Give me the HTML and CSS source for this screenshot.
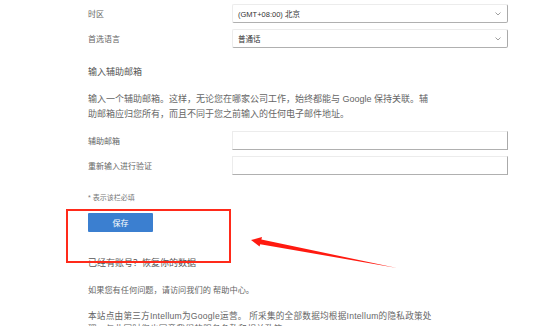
FILE: index.html
```html
<!DOCTYPE html>
<html lang="zh-CN">
<head>
<meta charset="utf-8">
<title>设置</title>
<link rel="stylesheet" href="styles.css">
</head>
<body>
<div class="page">
  <div class="row">
    <span class="label">时区</span>
    <div class="field select"><span>(GMT+08:00) 北京</span>
      <svg class="chev" width="6" height="4" viewBox="0 0 6 4"><path d="M0.5 0.5 L3 3 L5.5 0.5" fill="none" stroke="#888" stroke-width="0.8"/></svg>
    </div>
  </div>
  <div class="row">
    <span class="label">首选语言</span>
    <div class="field select"><span>普通话</span>
      <svg class="chev" width="6" height="4" viewBox="0 0 6 4"><path d="M0.5 0.5 L3 3 L5.5 0.5" fill="none" stroke="#888" stroke-width="0.8"/></svg>
    </div>
  </div>

  <h3 class="heading">输入辅助邮箱</h3>
  <p class="desc">输入一个辅助邮箱。这样，无论您在哪家公司工作，始终都能与 Google 保持关联。辅助邮箱应归您所有，而且不同于您之前输入的任何电子邮件地址。</p>

  <div class="row row-input">
    <span class="label">辅助邮箱</span>
    <div class="field input"></div>
  </div>
  <div class="row row-input">
    <span class="label">重新输入进行验证</span>
    <div class="field input"></div>
  </div>

  <p class="note">* 表示该栏必填</p>
  <button class="save">保存</button>

  <h3 class="sub">已经有账号？恢复你的数据</h3>
  <p class="text">如果您有任何问题，请访问我们的 帮助中心。</p>
  <p class="text last">本站点由第三方Intellum为Google运营。 所采集的全部数据均根据Intellum的隐私政策处理，与此同时您也同意我们的服务条款和相关政策。</p>

  <div class="annot-box"></div>
  <svg class="annot-arrow" width="554" height="326" viewBox="0 0 554 326">
    <polygon points="251,240 262,237 261.4,239.6 397,268 260.2,244.2 259.6,246.6" fill="#ff1a10"/>
  </svg>
</div>
</body>
</html>
```
FILE: styles.css
```css
html, body {
  margin: 0;
  padding: 0;
  background: #fff;
}
body {
  font-family: "Liberation Sans", "Noto Sans CJK SC", sans-serif;
  color: #555;
  overflow: hidden;
}
.page {
  position: relative;
  padding: 4px 0 0 88px;
  width: 554px;
  height: 326px;
  box-sizing: border-box;
}
.row {
  display: flex;
  align-items: center;
  height: 19px;
  margin-bottom: 6px;
}
.label {
  width: 144px;
  font-size: 8px;
  color: #666;
}
.field {
  box-sizing: border-box;
  width: 276px;
  height: 19px;
  border: 1px solid #ececec;
  border-right-color: #aaa;
  border-bottom-color: #b0b0b0;
  border-radius: 2px;
  background: #fff;
}
.select {
  display: flex;
  align-items: center;
  justify-content: space-between;
  padding: 0 6px 0 5px;
  font-size: 7.5px;
  color: #333;
}
.chev {
  display: block;
}
.input {
  border-radius: 0;
}
.heading {
  margin: 18px 0 0;
  font-size: 9px;
  font-weight: normal;
  line-height: 13px;
  color: #555;
}
.desc {
  margin: 13px 0 0;
  width: 345px;
  font-size: 9px;
  line-height: 15px;
  color: #666;
}
.desc + .row-input {
  margin-top: 8.5px;
}
.note {
  margin: 17px 0 0;
  font-size: 7px;
  line-height: 12px;
  color: #777;
}
.save {
  display: block;
  margin: 9px 0 0;
  width: 65px;
  height: 19px;
  border: none;
  border-radius: 1px;
  background: #3b7fd0;
  color: #fff;
  font-family: "Liberation Sans", "Noto Sans CJK SC", sans-serif;
  font-size: 8px;
  padding: 0;
}
.sub {
  margin: 25.5px 0 0;
  font-size: 9px;
  font-weight: normal;
  line-height: 13px;
  color: #555;
}
.text {
  margin: 14px 0 0;
  width: 352px;
  font-size: 8.2px;
  line-height: 13px;
  color: #666;
}
.text.last {
  margin-top: 13px;
  font-size: 8.6px;
  letter-spacing: 0.25px;
}
.annot-box {
  position: absolute;
  left: 66px;
  top: 209px;
  width: 161px;
  height: 50px;
  border: 2px solid #ff2a1a;
}
.annot-arrow {
  position: absolute;
  left: 0;
  top: 0;
  pointer-events: none;
}
```
